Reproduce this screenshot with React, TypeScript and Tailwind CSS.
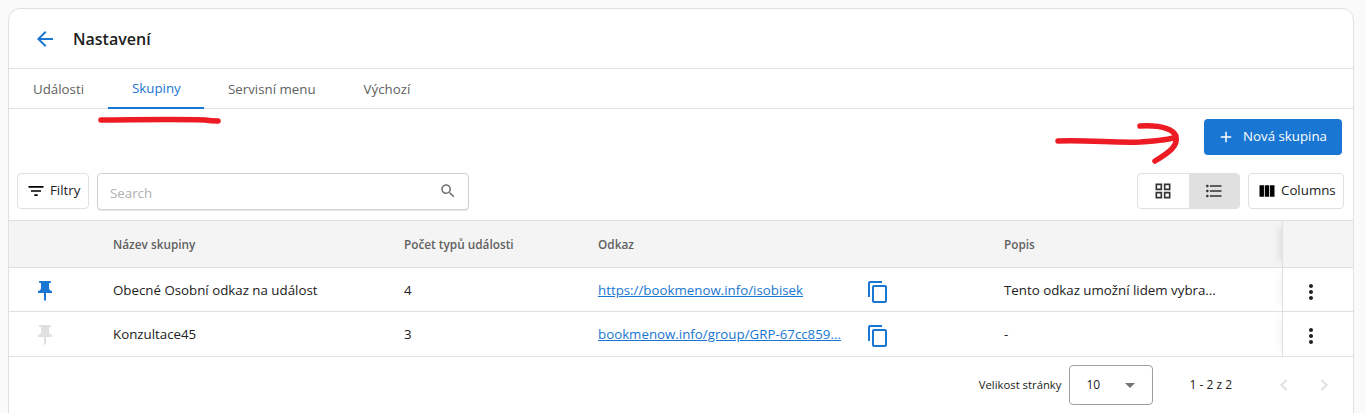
const Icon = ({ d, className }: { d: string; className?: string }) => (
  <svg viewBox="0 0 24 24" fill="currentColor" className={className}>
    <path d={d} />
  </svg>
);

const PIN = "M16 9V4h1c.55 0 1-.45 1-1s-.45-1-1-1H7c-.55 0-1 .45-1 1s.45 1 1 1h1v5c0 1.66-1.34 3-3 3v2h5.97v7l1 1 1-1v-7H19v-2c-1.66 0-3-1.34-3-3z";
const COPY = "M16 1H4c-1.1 0-2 .9-2 2v14h2V3h12V1zm3 4H8c-1.1 0-2 .9-2 2v14c0 1.1.9 2 2 2h11c1.1 0 2-.9 2-2V7c0-1.1-.9-2-2-2zm0 16H8V7h11v14z";
const MORE = "M12 8c1.1 0 2-.9 2-2s-.9-2-2-2-2 .9-2 2 .9 2 2 2zm0 2c-1.1 0-2 .9-2 2s.9 2 2 2 2-.9 2-2-.9-2-2-2zm0 6c-1.1 0-2 .9-2 2s.9 2 2 2 2-.9 2-2-.9-2-2-2z";

const COLS = "grid grid-cols-[88px_291px_194px_270px_136px_294px_71px]";

const rows = [
  { pin: "text-[#1976d2]", name: "Obecné Osobní odkaz na událost", count: "4", link: "https://bookmenow.info/isobisek", desc: "Tento odkaz umožní lidem vybra...", h: "h-[44px]" },
  { pin: "text-[#e0e0e0]", name: "Konzultace45", count: "3", link: "bookmenow.info/group/GRP-67cc859...", desc: "-", h: "h-[45px]" },
];

export default function App() {
  return (
    <div className="relative h-[413px] overflow-hidden bg-[#fafafa] pl-2 pt-2 pr-3 font-['Open_Sans','Noto_Sans',sans-serif] text-[13.3px] text-[#212121]">
      <div className="h-[420px] rounded-t-xl border border-[#e0e0e0] bg-white">
        <div className="flex h-[60px] items-center border-b border-[#e0e0e0] pl-6">
          <Icon d="M20 11H7.83l5.59-5.59L12 4l-8 8 8 8 1.41-1.41L7.83 13H20v-2z" className="h-6 w-6 text-[#1976d2]" />
          <h1 className="ml-4 text-base font-semibold text-[#212121]">Nastavení</h1>
        </div>

        <div className="flex h-10 border-b border-[#e0e0e0] text-[13.3px] text-[#616161]">
          <div className="flex w-[99px] items-center px-6 pt-0.5">Události</div>
          <div className="-mb-px flex w-[96px] items-center border-b-2 border-[#1976d2] px-6 pt-0.5 text-[#1976d2]">Skupiny</div>
          <div className="flex items-center px-6 pt-0.5">Servisní menu</div>
          <div className="flex items-center px-6 pt-0.5">Výchozí</div>
        </div>

        <div className="flex justify-end pr-[11px] pt-2.5">
          <button className="flex h-9 w-[138px] items-center justify-start gap-2 rounded bg-[#1976d2] pl-[13px] text-[13.3px] font-medium text-white">
            <Icon d="M19 13h-6v6h-2v-6H5v-2h6V5h2v6h6v2z" className="h-[18px] w-[18px]" />
            Nová skupina
          </button>
        </div>

        <div className="mt-[18px] flex items-start pl-2 pr-[9px]">
          <button className="flex h-9 w-[72px] items-center justify-start gap-1 rounded border border-[#e0e0e0] pl-2 text-[13.3px] text-[#212121]">
            <Icon d="M10 18h4v-2h-4v2zM3 6v2h18V6H3zm3 7h12v-2H6v2z" className="h-5 w-5 text-black" />
            Filtry
          </button>
          <div className="ml-2 flex h-[37px] w-[372px] items-center justify-between rounded border border-[#d0d0d0] pl-3 pr-[11px] shadow-[0_1px_1px_rgba(0,0,0,0.1)]">
            <span className="mt-1 text-[13.3px] text-[#b0b0b0]">Search</span>
            <Icon d="M15.5 14h-.79l-.28-.27C15.41 12.59 16 11.11 16 9.5 16 5.91 13.09 3 9.5 3S3 5.91 3 9.5 5.91 16 9.5 16c1.61 0 3.09-.59 4.23-1.57l.27.28v.79l5 4.99L20.49 19l-4.99-5zm-6 0C7.01 14 5 11.99 5 9.5S7.01 5 9.5 5 14 7.01 14 9.5 11.99 14 9.5 14z" className="-mt-0.5 h-[18px] w-[18px] text-[#757575]" />
          </div>
          <div className="ml-auto flex h-9 w-[103px] overflow-hidden rounded border border-[#e0e0e0]">
            <div className="flex w-[51px] items-center justify-center pr-0.5">
              <Icon d="M3 3v8h8V3H3zm6 6H5V5h4v4zm-6 4v8h8v-8H3zm6 6H5v-4h4v4zm4-16v8h8V3h-8zm6 6h-4V5h4v4zm-6 4v8h8v-8h-8zm6 6h-4v-4h4v4z" className="h-5 w-5 text-[#333333]" />
            </div>
            <div className="flex flex-1 items-center justify-center bg-[#e0e0e0]">
              <Icon d="M4 10.5c-.83 0-1.5.67-1.5 1.5s.67 1.5 1.5 1.5 1.5-.67 1.5-1.5-.67-1.5-1.5-1.5zm0-6c-.83 0-1.5.67-1.5 1.5S3.17 7.5 4 7.5 5.5 6.83 5.5 6 4.83 4.5 4 4.5zm0 12c-.83 0-1.5.68-1.5 1.5s.68 1.5 1.5 1.5 1.5-.68 1.5-1.5-.67-1.5-1.5-1.5zM7 19h14v-2H7v2zm0-6h14v-2H7v2zm0-8v2h14V5H7z" className="h-5 w-5 text-[#333333]" />
            </div>
          </div>
          <button className="ml-2 flex h-9 w-24 items-center justify-start gap-1 rounded border border-[#e0e0e0] pl-2 text-[13.3px] text-[#212121]">
            <Icon d="M14.67 5v14H9.33V5h5.34zm1 14H21V5h-5.33v14zm-7.34 0V5H3v14h5.33z" className="h-5 w-5 text-black" />
            Columns
          </button>
        </div>

        <div className="mt-[10px]">
          <div className={`${COLS} h-[48px] items-center border-y border-[#e0e0e0] bg-[#f4f4f4] text-[11.8px] font-semibold text-[#616161]`}>
            <div />
            <div className="px-4 pt-0.5">Název skupiny</div>
            <div className="px-4 pt-0.5">Počet typů události</div>
            <div className="col-span-2 px-4 pt-0.5">Odkaz</div>
            <div className="px-4 pt-0.5">Popis</div>
            <div className="h-full border-l border-[#e0e0e0] bg-[#f4f4f4] shadow-[-8px_0_8px_-6px_rgba(0,0,0,0.1)]" />
          </div>
          {rows.map((r) => (
            <div key={r.name} className={`${COLS} ${r.h} items-center border-b border-[#e0e0e0] text-[13.3px]`}>
              <div className="flex justify-start pl-6 pt-0.5">
                <Icon d={PIN} className={`h-6 w-6 ${r.pin}`} />
              </div>
              <div className="px-4 pt-0.5">{r.name}</div>
              <div className="px-4 pt-0.5">{r.count}</div>
              <div className="whitespace-nowrap pl-4 pt-0.5">
                <a className="text-[#1976d2] underline">{r.link}</a>
              </div>
              <div className="pl-[14px] pt-1">
                <Icon d={COPY} className="h-6 w-6 text-[#1976d2]" />
              </div>
              <div className="px-4 pt-0.5">{r.desc}</div>
              <div className="flex h-full items-center justify-start border-l border-[#e0e0e0] bg-white pl-4 pt-1 shadow-[-8px_0_8px_-6px_rgba(0,0,0,0.06)]">
                <Icon d={MORE} className="h-6 w-6 text-[#212121]" />
              </div>
            </div>
          ))}
          <div className="flex h-[56px] items-center justify-end text-[11.3px] text-[#212121]">
            <span>Velikost stránky</span>
            <div className="ml-2 flex h-10 w-[84px] items-center justify-between rounded border border-[#9e9e9e] pl-4 pr-[14px] text-xs">
              <span>10</span>
              <Icon d="M7 10l5 5 5-5z" className="h-6 w-6 -mr-1 text-[#757575]" />
            </div>
            <span className="ml-9 text-xs">1 - 2 z 2</span>
            <Icon d="M15.41 7.41 14 6l-6 6 6 6 1.41-1.41L10.83 12z" className="ml-[40px] h-6 w-6 text-[#e0e0e0]" />
            <Icon d="M10 6 8.59 7.41 13.17 12l-4.58 4.59L10 18l6-6z" className="ml-4 mr-[17px] h-6 w-6 text-[#e0e0e0]" />
          </div>
        </div>
      </div>

      <svg className="pointer-events-none absolute left-0 top-0 h-[413px] w-[1366px]" viewBox="0 0 1366 413" fill="none">
        <path d="M101 120 C130 120 170 119 205 120 C211 121 214 121 218 121" stroke="#ed1c24" strokeWidth="5.5" strokeLinecap="round" />
        <path d="M1058 141 C1090 140 1115 143 1140 142 C1155 141 1170 140 1176 137 M1140 126 C1160 125 1172 128 1176 136 C1178 146 1170 152 1155 161" stroke="#ed1c24" strokeWidth="5.5" strokeLinecap="round" strokeLinejoin="round" />
      </svg>
    </div>
  );
}
